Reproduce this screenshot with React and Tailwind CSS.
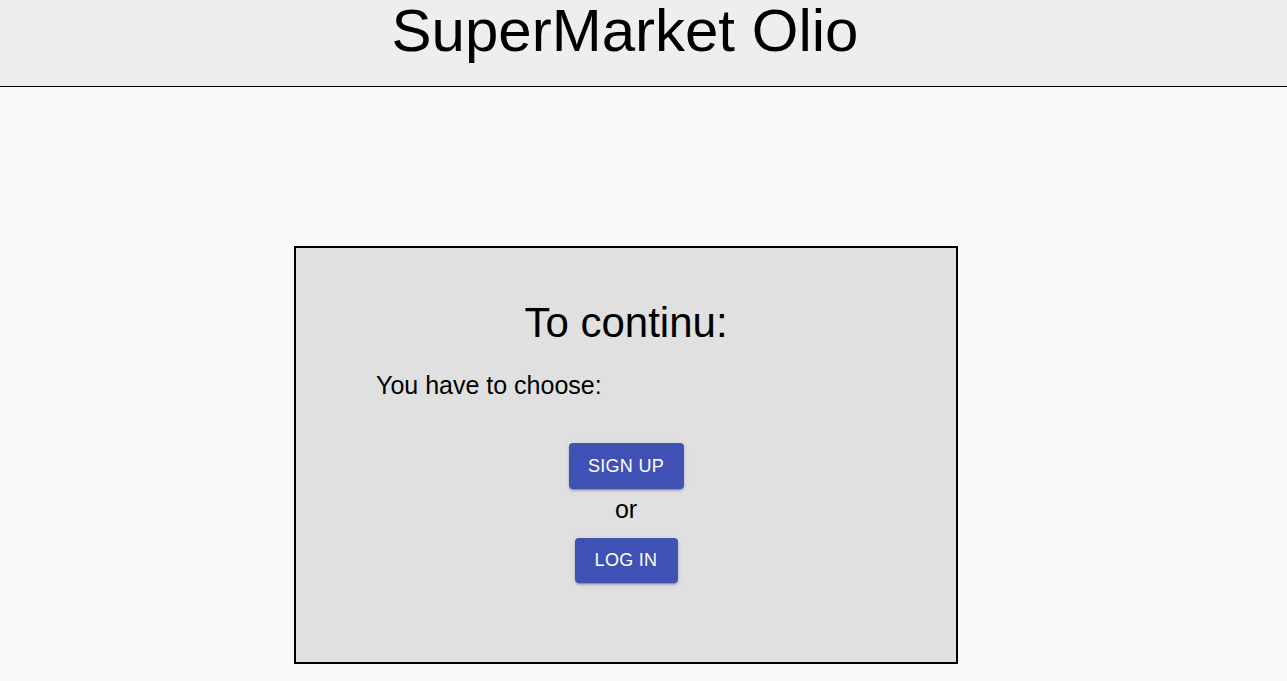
import React from 'react';

const muiShadow =
  'shadow-[0px_3px_1px_-2px_rgba(0,0,0,0.2),0px_2px_2px_0px_rgba(0,0,0,0.14),0px_1px_5px_0px_rgba(0,0,0,0.12)]';

function ActionButton({ children, className = '' }) {
  return (
    <button
      className={`flex items-center justify-center whitespace-nowrap rounded-[4px] bg-[#3f51b5] text-[18px] uppercase tracking-[0.3px] text-white ${muiShadow} ${className}`}
    >
      {children}
    </button>
  );
}

export default function App() {
  return (
    <div className="min-h-[681px] bg-[#fafafa] font-['Liberation_Sans',Arial,sans-serif] text-black">
      <header className="h-[87px] border-b border-black bg-[#eeeeee] pr-[37px]">
        <h1 className="text-center text-[60px] leading-[62px] font-normal">SuperMarket Olio</h1>
      </header>

      <main className="flex flex-col items-center pr-[35px] pt-[159px]">
        <div className="w-[664px] h-[418px] border-2 border-black bg-[#e0e0e0] pt-[51px] px-[80px]">
          <h2 className="text-center text-[42px] leading-[48px] font-normal">To continu:</h2>
          <p className="mt-[24px] text-[25px] leading-[29px]">You have to choose:</p>

          <div className="mt-[43px] flex flex-col items-center">
            <ActionButton className="h-[46px] w-[115px]">Sign up</ActionButton>
            <span className="mt-[6px] text-[25px] leading-[29px]">or</span>
            <ActionButton className="mt-[14px] h-[45px] w-[103px]">Log in</ActionButton>
          </div>
        </div>
      </main>
    </div>
  );
}
